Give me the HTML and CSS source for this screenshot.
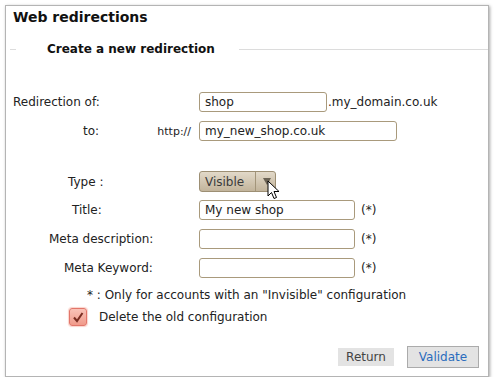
FILE: index.html
```html
<!DOCTYPE html>
<html lang="en">
<head>
  <meta charset="UTF-8" />
  <title>Web redirections</title>
  <link rel="stylesheet" href="styles.css">
</head>
<body>

<div class="panel">
  <div class="panel-title">Web redirections</div>

  <div class="legend">
    <span class="legend-dash"></span>
    <span class="legend-text">Create a new redirection</span>
    <span class="legend-line"></span>
  </div>

  <form class="redirect-form">
    <div class="row row-first">
      <div class="label-cell"><span class="lbl-redirection">Redirection of:</span></div>
      <input type="text" class="field field-short" value="shop" />
      <span class="suffix">.my_domain.co.uk</span>
    </div>

    <div class="row">
      <div class="label-cell">
        <span class="lbl-to">to:</span>
        <span class="prefix">http://</span>
      </div>
      <input type="text" class="field field-long" value="my_new_shop.co.uk" />
    </div>

    <div class="row row-type">
      <div class="label-cell"><span class="lbl-type">Type :</span></div>
      <div class="dropdown">
        <span class="dropdown-value">Visible</span>
        <span class="dropdown-arrow"></span>
        <svg class="cursor" width="13" height="20" viewBox="0 0 13 20">
          <path d="M1 1 L1 16 L4.5 12.5 L7 18.5 L9.5 17.5 L7 11.5 L12 11.5 Z" fill="#fff" stroke="#000" stroke-width="1" stroke-linejoin="round"/>
        </svg>
      </div>
    </div>

    <div class="row row-close">
      <div class="label-cell"><span class="lbl-title">Title:</span></div>
      <input type="text" class="field field-mid" value="My new shop" />
      <span class="required">(*)</span>
    </div>

    <div class="row">
      <div class="label-cell"><span class="lbl-desc">Meta description:</span></div>
      <input type="text" class="field field-mid" value="" />
      <span class="required">(*)</span>
    </div>

    <div class="row">
      <div class="label-cell"><span class="lbl-keyword">Meta Keyword:</span></div>
      <input type="text" class="field field-mid" value="" />
      <span class="required">(*)</span>
    </div>

    <div class="note">* : Only for accounts with an "Invisible" configuration</div>

    <div class="check-row">
      <span class="checkbox">
        <svg width="12" height="12" viewBox="0 0 12 12">
          <path d="M2 6.5 L5 10 L10.5 2" fill="none" stroke="#7a2e22" stroke-width="2"/>
        </svg>
      </span>
      <span class="check-label">Delete the old configuration</span>
    </div>

    <div class="actions">
      <button type="button" class="btn-return">Return</button>
      <button type="submit" class="btn-validate">Validate</button>
    </div>
  </form>
</div>

</body>
</html>
```

FILE: styles.css
```css
body {
  margin: 0;
  background: #fff;
  font-family: 'DejaVu Sans', Verdana, sans-serif;
  font-size: 12px;
  color: #222;
}

.panel {
  box-sizing: border-box;
  width: 484px;
  height: 372px;
  margin: 5px 0 0 5px;
  padding-top: 3px;
  border: 1px solid #b4b4b4;
  box-shadow: 1px 1px 3px rgba(0, 0, 0, 0.35);
  background: #fff;
}

.panel-title {
  padding-left: 7px;
  font-size: 14px;
  font-weight: bold;
  line-height: 17px;
  color: #111;
}

.legend {
  display: flex;
  align-items: center;
  margin-top: 16px;
  line-height: 15px;
}

.legend-dash {
  width: 6px;
  height: 1px;
  margin-left: 4px;
  background: #dcdcdc;
}

.legend-text {
  margin: 0 24px 0 31px;
  font-weight: bold;
  color: #111;
}

.legend-line {
  flex: 1;
  height: 1px;
  background: #dcdcdc;
}

.redirect-form {
  margin: 0;
}

.row {
  display: flex;
  align-items: center;
  height: 20px;
  margin-top: 9px;
}

.row-first {
  margin-top: 35px;
}

.row-type {
  height: 21px;
  margin-top: 30px;
}

.row-close {
  margin-top: 8px;
}

.label-cell {
  display: flex;
  align-items: center;
  width: 193px;
  flex-shrink: 0;
}

.lbl-redirection { padding-left: 7px; }
.lbl-to { padding-left: 77px; }
.lbl-type { padding-left: 62px; }
.lbl-title { padding-left: 66px; }
.lbl-desc { padding-left: 43px; }
.lbl-keyword { padding-left: 58px; }

.prefix {
  margin-left: auto;
  margin-right: 8px;
  font-size: 11px;
}

.field {
  box-sizing: border-box;
  height: 20px;
  padding: 0 5px;
  border: 1px solid #a99a7c;
  border-radius: 3px;
  background: #fff;
  font-family: 'DejaVu Sans', Verdana, sans-serif;
  font-size: 12px;
  color: #222;
  outline: none;
}

.field-short { width: 128px; }
.field-long { width: 198px; }
.field-mid { width: 156px; }

.suffix {
  margin-left: 1px;
}

.required {
  margin-left: 6px;
}

.dropdown {
  position: relative;
  box-sizing: border-box;
  display: flex;
  align-items: center;
  width: 77px;
  height: 21px;
  border: 1px solid #9d8f74;
  border-radius: 3px;
  background: linear-gradient(to bottom, #e2d9c9, #c2b49b);
  color: #3a3a3a;
}

.dropdown-value {
  width: 55px;
  padding-left: 5px;
  box-sizing: border-box;
}

.dropdown-arrow {
  flex: 1;
  height: 100%;
  border-left: 1px solid #a3957a;
  position: relative;
}

.dropdown-arrow::after {
  content: "";
  position: absolute;
  left: 7px;
  top: 6px;
  border-left: 4px solid transparent;
  border-right: 4px solid transparent;
  border-top: 7px solid #6a6254;
}

.cursor {
  position: absolute;
  left: 67px;
  top: 8px;
}

.note {
  margin: 10px 0 0 81px;
  line-height: 15px;
}

.check-row {
  display: flex;
  align-items: center;
  margin: 5px 0 0 63px;
}

.checkbox {
  box-sizing: border-box;
  display: flex;
  align-items: center;
  justify-content: center;
  width: 18px;
  height: 18px;
  border: 1px solid #e2766a;
  border-radius: 3px;
  background: linear-gradient(to bottom, #f9c3b8, #f09a8a);
  box-shadow: 0 0 1px 1px #fbd4cc;
}

.check-label {
  margin-left: 12px;
}

.actions {
  display: flex;
  justify-content: flex-end;
  align-items: center;
  gap: 13px;
  height: 22px;
  margin-top: 20px;
  padding-right: 9px;
}

.btn-return,
.btn-validate {
  font-family: 'DejaVu Sans', Verdana, sans-serif;
  font-size: 12px;
  background: #e3e3e3;
  padding: 0;
  cursor: pointer;
}

.btn-return {
  width: 56px;
  height: 18px;
  border: none;
  color: #444;
}

.btn-validate {
  width: 72px;
  height: 22px;
  border: 1px solid #ababab;
  color: #2a6cbd;
}
```
